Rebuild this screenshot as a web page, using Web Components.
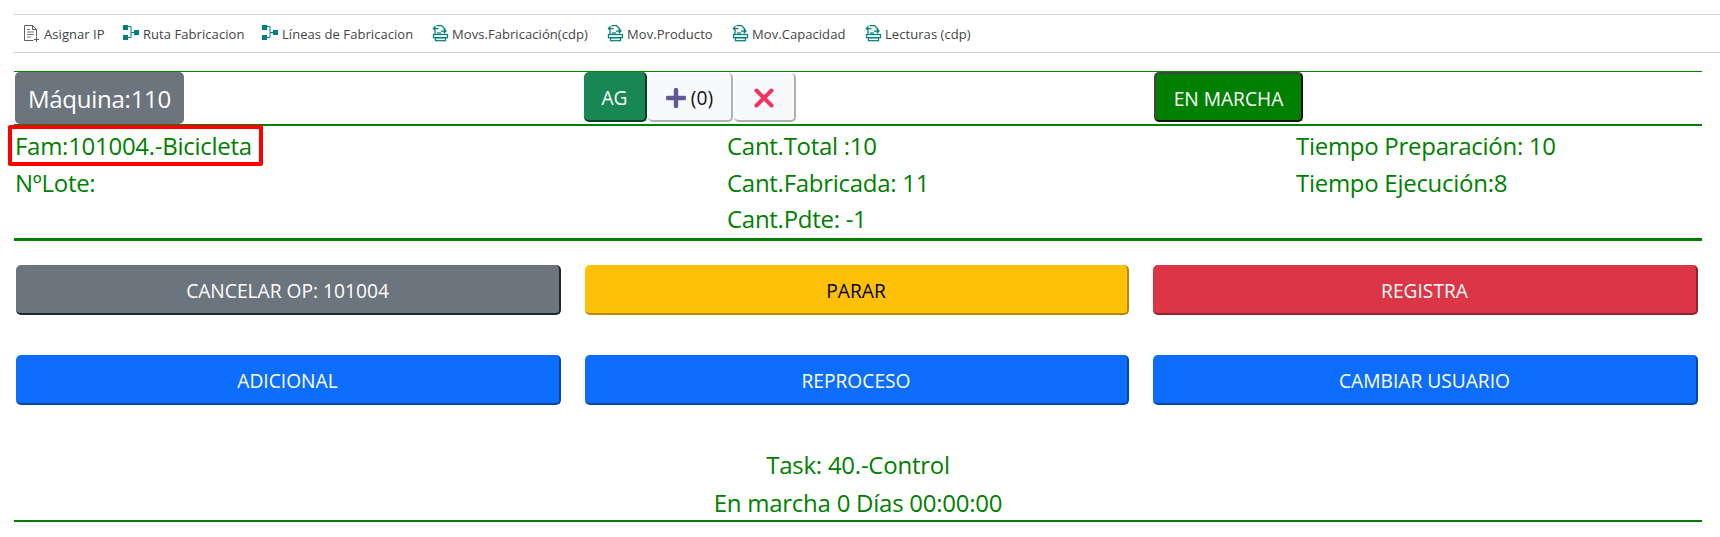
<!DOCTYPE html>
<html lang="es"><head><meta charset="utf-8"><title>Máquina</title>
<style>
html,body{margin:0;background:#fff}
body{font-family:"Open Sans","Noto Sans",sans-serif;height:537px;overflow:hidden}
</style></head><body>
<app-toolbar>
<tool-item icon="doc" w="99">Asignar IP</tool-item>
<tool-item icon="tree" w="139">Ruta Fabricacion</tool-item>
<tool-item icon="tree" w="170">Líneas de Fabricacion</tool-item>
<tool-item icon="mov" w="175">Movs.Fabricación(cdp)</tool-item>
<tool-item icon="mov" w="125">Mov.Producto</tool-item>
<tool-item icon="mov" w="133">Mov.Capacidad</tool-item>
<tool-item icon="mov" w="120">Lecturas (cdp)</tool-item>
</app-toolbar>

<machine-panel>
<head-row>
<div slot="a"><flat-btn tone="secondary" big>Máquina:110</flat-btn></div>
<div slot="b"><flat-btn tone="success" w="63">AG</flat-btn><flat-btn tone="light" w="85"><svg width="20" height="20" viewBox="0 0 20 20"><path d="M10 2v16M2 10h16" stroke="#5f5a96" stroke-width="4.4" stroke-linecap="round"/></svg>&nbsp;<span style="color:#111">(0)</span></flat-btn><flat-btn tone="light" w="62"><svg width="20" height="20" viewBox="0 0 20 20"><path d="M2.5 2.5l15 15M17.5 2.5l-15 15" stroke="#f7315f" stroke-width="4" stroke-linecap="round"/></svg></flat-btn></div>
<div slot="c"><flat-btn tone="run" w="149">EN MARCHA</flat-btn></div>
</head-row>
<info-grid>
<span><mark-box>Fam:101004.-Bicicleta</mark-box></span><span>Cant.Total :10</span><span>Tiempo Preparación: 10</span>
<span>NºLote:</span><span>Cant.Fabricada: 11</span><span>Tiempo Ejecución:8</span>
<span></span><span>Cant.Pdte: -1</span><span></span>
</info-grid>
<action-grid>
<flat-btn tone="secondary" wide>CANCELAR OP: 101004</flat-btn>
<flat-btn tone="warning" wide>PARAR</flat-btn>
<flat-btn tone="danger" wide>REGISTRA</flat-btn>
<flat-btn tone="primary" wide>ADICIONAL</flat-btn>
<flat-btn tone="primary" wide>REPROCESO</flat-btn>
<flat-btn tone="primary" wide>CAMBIAR USUARIO</flat-btn>
</action-grid>
<task-info><div>Task: 40.-Control</div><div>En marcha 0 Días 00:00:00</div></task-info>
</machine-panel>

<script>
const ICONS={
 doc:`<g fill="none" stroke="#5f5f5f"><path d="M.5 15.5V.5h8l4 4v7M8.5 .5V4.5H12.5M.5 15.5h9"/><path d="M3 4.5h3M3 7h7M3 9.5h7M3 12h4" stroke="#777"/><path d="M10 14.5h5M12.5 12v5"/></g>`,
 tree:`<g fill="#00807f"><rect x="0" y="0" width="5" height="5"/><rect x="0" y="10" width="5" height="5"/><rect x="11" y="5" width="5" height="5"/></g><path d="M5 1.5H8V12.5H5M8 7.5H11" fill="none" stroke="#00807f"/>`,
 mov:`<g fill="none" stroke="#00807f" stroke-width="1.25"><path d="M4.5 .6h5l3 3V7"/><path d="M6.5 3.5H1.4M3.6 1.3L1.4 3.5l2.2 2.2"/><path d="M9 6H14M11.8 3.8L14 6l-2.2 2.2"/><path d="M3 6v3.5"/><path d="M5 8h4"/><rect x="1.5" y="9.5" width="14" height="3.2"/><rect x="3.5" y="12.7" width="10" height="3"/></g>`
};
function def(name, css, html){
  customElements.define(name, class extends HTMLElement{
    constructor(){super();this.attachShadow({mode:'open'}).innerHTML='<style>'+css+'</style>'+html;}
  });
}
def('app-toolbar',`:host{display:flex;margin:14px 0 0 14px;height:37px;padding-left:10px;align-items:center;border-top:1px solid #d4d4d8;border-bottom:1px solid #d4d4d8;color:#444;font-size:13px}`,`<slot></slot>`);
customElements.define('tool-item',class extends HTMLElement{
  connectedCallback(){
    if(this.shadowRoot)return;
    this.attachShadow({mode:'open'}).innerHTML=`<style>:host{display:flex;align-items:center;width:${this.getAttribute('w')}px;flex:none;white-space:nowrap;letter-spacing:.06px}svg{width:17px;height:17px;margin-right:3px;flex:none;overflow:visible}</style><svg viewBox="0 0 17 17">${ICONS[this.getAttribute('icon')]}</svg><span><slot></slot></span>`;
  }
});
def('machine-panel',`:host{display:block;margin:18px 18px 0 14px;color:green;font-size:24px}`,`<slot></slot>`);
def('head-row',`:host{display:grid;grid-template-columns:570px 570px 1fr;height:52px;border-top:1px solid green;border-bottom:2px solid green}
 ::slotted(div){display:flex;align-items:flex-start}`,`<slot name="a"></slot><slot name="b"></slot><slot name="c"></slot>`);
customElements.define('flat-btn',class extends HTMLElement{
  connectedCallback(){
    if(this.shadowRoot)return;
    const t=this.getAttribute('tone'),w=this.getAttribute('w');
    const pal={secondary:['#6c757d','#fff','#23272b'],success:['#198754','#fff','#0b3d26'],light:['#f8f9fa','#000','#aeb0b2'],run:['green','#fff','#111'],warning:['#ffc107','#000','#b58a06'],danger:['#dc3545','#fff','#8f2430'],primary:['#0d6efd','#fff','#0a47a5']}[t];
    const big=this.hasAttribute('big'),wide=this.hasAttribute('wide');
    this.attachShadow({mode:'open'}).innerHTML=`<style>:host{display:${wide?'flex':'inline-flex'};box-sizing:border-box;align-items:center;justify-content:center;background:${pal[0]};color:${pal[1]};border-radius:5px;
      height:${big?52:50}px;${big?'width:169px;font-size:24px;margin-left:1px;letter-spacing:-.25px;':'font-size:19.2px;padding-top:2px;'}
      ${w?`width:${w}px;`:''}${wide?'':'flex:none;'}
      ${big?'':`border-right:2px solid ${pal[2]};border-bottom:2px solid ${pal[2]};`}
      ${t==='run'?'border:2px solid #444;border-right-color:#111;border-bottom-color:#111;':''}
      ${t==='light'?'margin-left:1px;margin-top:1px;height:49px;':''}
      white-space:nowrap}
      svg{display:block}</style><slot></slot>`;
  }
});
def('info-grid',`:host{display:grid;grid-template-columns:712px 569px 1fr;grid-auto-rows:36.6px;align-items:center;padding:2px 0 0 1px;height:110px;border-bottom:3px solid green;letter-spacing:-.28px;line-height:36px}`,`<slot></slot>`);
customElements.define('mark-box',class extends HTMLElement{
  constructor(){super();this.attachShadow({mode:'open'}).innerHTML=`<style>:host{display:inline-block;position:relative}i{position:absolute;left:-7px;top:-3px;width:255px;height:41px;box-sizing:border-box;border:4px solid #f00;border-radius:2px}</style><slot></slot><i></i>`;}
});
def('action-grid',`:host{display:grid;grid-template-columns:545px 544px 545px;column-gap:24px;row-gap:40px;margin:24px 0 0 2px}`,`<slot></slot>`);
def('task-info',`:host{display:block;text-align:center;margin-top:41px;line-height:38px;height:74px;letter-spacing:-.25px;border-bottom:2px solid green}`,`<slot></slot>`);
</script>
</body></html>
